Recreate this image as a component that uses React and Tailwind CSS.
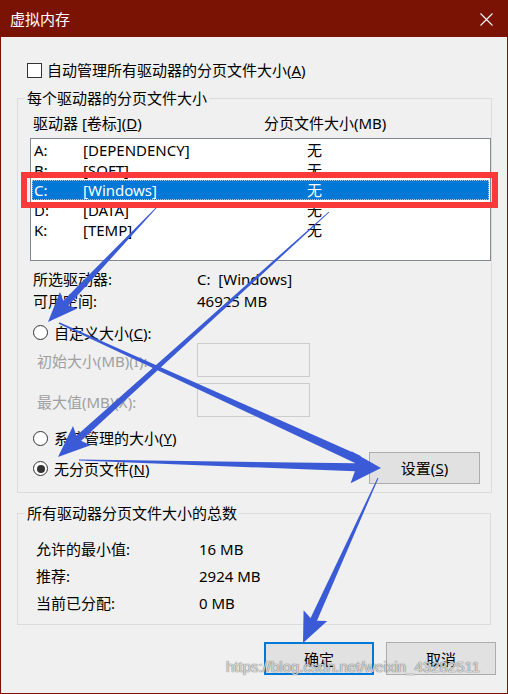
import React from 'react';

const drives = [
  { letter: 'A:', label: '[DEPENDENCY]', size: '无' },
  { letter: 'B:', label: '[SOFT]', size: '无' },
  { letter: 'C:', label: '[Windows]', size: '无', selected: true },
  { letter: 'D:', label: '[DATA]', size: '无' },
  { letter: 'K:', label: '[TEMP]', size: '无' },
];

// tapered arrow: thin tail at s, head at t
function arrowPoints(s, t, w0, w1, headLen, headW) {
  const dx = t[0] - s[0];
  const dy = t[1] - s[1];
  const len = Math.hypot(dx, dy);
  const ux = dx / len;
  const uy = dy / len;
  const nx = -uy;
  const ny = ux;
  const bx = t[0] - ux * headLen;
  const by = t[1] - uy * headLen;
  const pts = [
    [s[0] + nx * w0 / 2, s[1] + ny * w0 / 2],
    [bx + nx * w1 / 2, by + ny * w1 / 2],
    [bx - ux * 4 + nx * headW / 2, by - uy * 4 + ny * headW / 2],
    [t[0], t[1]],
    [bx - ux * 4 - nx * headW / 2, by - uy * 4 - ny * headW / 2],
    [bx - nx * w1 / 2, by - ny * w1 / 2],
    [s[0] - nx * w0 / 2, s[1] - ny * w0 / 2],
  ];
  return pts.map((p) => p.join(',')).join(' ');
}

function shaftPoints(s, t, w0, w1) {
  const dx = t[0] - s[0];
  const dy = t[1] - s[1];
  const len = Math.hypot(dx, dy);
  const nx = -dy / len;
  const ny = dx / len;
  return [
    [s[0] + nx * w0 / 2, s[1] + ny * w0 / 2],
    [t[0] + nx * w1 / 2, t[1] + ny * w1 / 2],
    [t[0] - nx * w1 / 2, t[1] - ny * w1 / 2],
    [s[0] - nx * w0 / 2, s[1] - ny * w0 / 2],
  ].map((p) => p.join(',')).join(' ');
}

function Radio({ checked }) {
  return (
    <span className="w-[15px] h-[15px] rounded-full border border-[#333] bg-white flex items-center justify-center shrink-0">
      {checked && <span className="w-[8px] h-[8px] rounded-full bg-[#333]"></span>}
    </span>
  );
}

function Btn({ children, primary }) {
  return (
    <div
      className={`w-[110px] h-[33px] bg-[#e1e1e1] flex items-center justify-center text-black ${
        primary ? 'border-2 border-[#0078d7]' : 'border border-[#adadad]'
      }`}
    >
      {children}
    </div>
  );
}

export default function App() {
  return (
    <div className="w-[508px] h-[694px] bg-[#f0f0f0] border border-[#7b1305] border-t-0 relative overflow-hidden text-[15px] leading-[20px] text-black font-['Noto_Sans','Noto_Sans_CJK_SC',sans-serif]">
      {/* title bar */}
      <div className="h-[37px] bg-[#7b1305] flex items-center justify-between pl-[9px] pr-[14px] text-white">
        <span className="text-[15px]">虚拟内存</span>
        <svg width="13" height="13" viewBox="0 0 13 13" className="mt-[1px]">
          <path d="M0.5 0.5L12.5 12.5M12.5 0.5L0.5 12.5" stroke="white" strokeWidth="1.1" />
        </svg>
      </div>

      <div className="px-[16px]">
        <label className="mt-[23px] h-[20px] flex items-center gap-[5px] pl-[10px]">
          <span className="w-[15px] h-[15px] border border-[#333] bg-white shrink-0"></span>
          <span>
            自动管理所有驱动器的分页文件大小(<span className="underline">A</span>)
          </span>
        </label>

        <fieldset className="mt-[8px] border border-[#dcdcdc] pb-[8px]">
          <legend className="ml-[7px] px-[2px] leading-[20px]">每个驱动器的分页文件大小</legend>

          <div className="mt-[5px] h-[20px] flex pl-[15px]">
            <span className="w-[231px]">
              驱动器 [卷标](<span className="underline">D</span>)
            </span>
            <span>分页文件大小(MB)</span>
          </div>

          <div className="mt-[5px] ml-[12px] w-[461px] h-[123px] border border-[#828790] bg-white pt-[1px]">
            {drives.map((d) => (
              <div
                key={d.letter}
                className={`mx-[1px] h-[20px] flex items-center pl-[2px] ${
                  d.selected ? 'bg-[#0078d7] text-white outline-1 outline-dotted outline-[#9fc8ef] -outline-offset-1' : ''
                }`}
              >
                <span className="w-[49px]">{d.letter}</span>
                <span className="w-[224px]">{d.label}</span>
                <span>{d.size}</span>
              </div>
            ))}
          </div>

          <div className="mt-[7px] pl-[15px]">
            <div className="h-[22px] flex items-center">
              <span className="w-[164px]">所选驱动器:</span>
              <span>C:&nbsp;&nbsp;[Windows]</span>
            </div>
            <div className="h-[22px] flex items-center">
              <span className="w-[164px]">可用空间:</span>
              <span>46925 MB</span>
            </div>
            <div className="mt-[10px] h-[21px] flex items-center gap-[6px]">
              <Radio />
              <span>
                自定义大小(<span className="underline">C</span>):
              </span>
            </div>
            <div className="h-[34px] flex items-center">
              <span className="w-[164px] pl-[4px] text-[#a0a0a0] pt-[2px]">初始大小(MB)(I):</span>
              <span className="w-[113px] h-[34px] border border-[#cccccc]"></span>
            </div>
            <div className="mt-[6px] h-[34px] flex items-center">
              <span className="w-[164px] pl-[4px] text-[#a0a0a0] pt-[4px]">最大值(MB)(X):</span>
              <span className="w-[113px] h-[34px] border border-[#cccccc]"></span>
            </div>
            <div className="mt-[10px] h-[22px] flex items-center gap-[6px]">
              <Radio />
              <span>
                系统管理的大小(<span className="underline">Y</span>)
              </span>
            </div>
            <div className="mt-[3px] h-[32px] flex items-center">
              <div className="flex items-center gap-[6px] w-[336px] pt-[1px]">
                <Radio checked />
                <span>
                  无分页文件(<span className="underline">N</span>)
                </span>
              </div>
              <div className="w-[111px] h-[32px] bg-[#e1e1e1] border border-[#adadad] flex items-center justify-center">
                设置(<span className="underline">S</span>)
              </div>
            </div>
          </div>
        </fieldset>

        <fieldset className="mt-[10px] border border-[#dcdcdc] pb-[8px]">
          <legend className="ml-[7px] px-[2px] leading-[20px]">所有驱动器分页文件大小的总数</legend>
          <div className="mt-[12px] pl-[18px]">
            <div className="h-[27px] flex items-center">
              <span className="w-[163px]">允许的最小值:</span>
              <span>16 MB</span>
            </div>
            <div className="h-[27px] flex items-center">
              <span className="w-[163px]">推荐:</span>
              <span>2924 MB</span>
            </div>
            <div className="h-[27px] flex items-center">
              <span className="w-[163px]">当前已分配:</span>
              <span>0 MB</span>
            </div>
          </div>
        </fieldset>
      </div>

      <div className="mt-[17px] pr-[11px] flex justify-end gap-[12px]">
        <Btn primary>确定</Btn>
        <Btn>取消</Btn>
      </div>

      {/* red highlight around selected drive */}
      <div className="absolute left-[20px] top-[172px] w-[477px] h-[36px] border-[6px] border-[#fa3a3a]"></div>

      {/* annotation arrows */}
      <svg className="absolute inset-0 pointer-events-none" width="508" height="694">
        <g fill="#3b5bd6">
          <polygon points={arrowPoints([155, 208], [47, 322], 1, 7, 26, 24)} />
          <polygon points={arrowPoints([328, 212], [57, 457], 1, 7, 28, 26)} />
          <polygon points={shaftPoints([58, 323], [358, 460], 1.5, 9)} />
          <polygon points={arrowPoints([78, 460], [380, 468], 1, 8, 26, 32)} />
          <polygon points={arrowPoints([377, 478], [302, 643], 1, 7, 26, 26)} />
        </g>
      </svg>

      {/* watermark */}
      <div className="absolute left-[225px] top-[655px] text-[15px] leading-[24px] text-[#f4f4f4]/80 font-['Liberation_Sans',sans-serif] [text-shadow:0_0_1px_rgba(80,80,80,0.9),0_0_1px_rgba(80,80,80,0.6)]">
        https://blog.csdn.net/weixin_43282511
      </div>
    </div>
  );
}
